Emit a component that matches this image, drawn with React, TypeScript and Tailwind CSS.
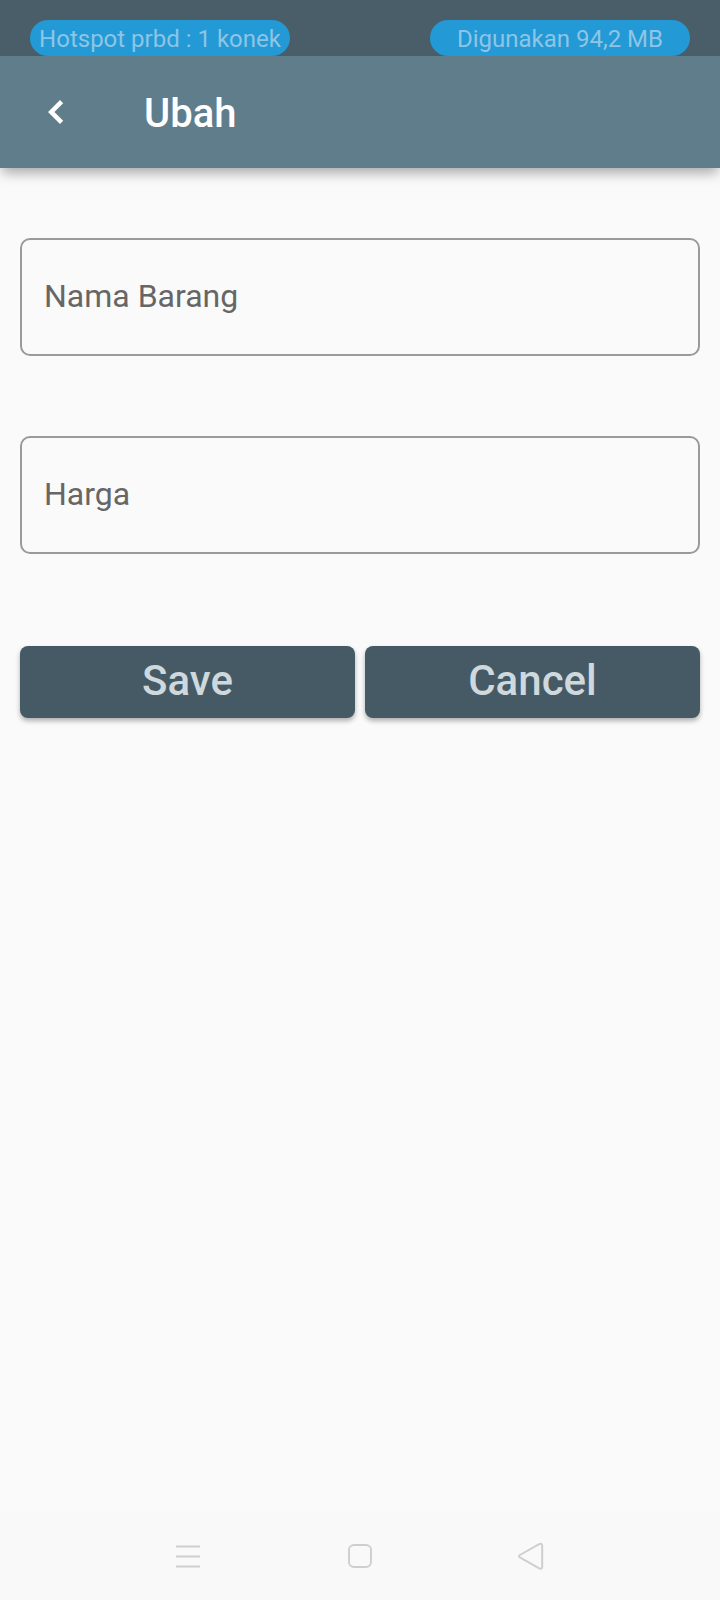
import { useState } from "react";

type FieldProps = { id: string; label: string; inputMode?: "text" | "numeric" };

function StatusPill({ text }: { text: string }) {
  return (
    <span className="flex h-9 w-[260px] items-center justify-center whitespace-nowrap rounded-full bg-[#2399d5] pt-0.5 text-[24px] leading-none text-[#8ec5e5]">
      {text}
    </span>
  );
}

function Field({ id, label, inputMode = "text" }: FieldProps) {
  const [value, setValue] = useState("");
  return (
    <div className="grid h-[118px] items-center rounded-[10px] border-2 border-[#9a9a9a] focus-within:border-[#607d8b]">
      <input
        id={id}
        inputMode={inputMode}
        value={value}
        onChange={(event) => setValue(event.target.value)}
        className="peer col-start-1 row-start-1 h-full w-full min-w-0 bg-transparent px-[22px] text-[32px] text-[#212121] outline-none"
      />
      <label
        htmlFor={id}
        className={
          value
            ? "sr-only"
            : "pointer-events-none col-start-1 row-start-1 px-[22px] pb-0.5 text-[32px] leading-10 text-[#666666] peer-focus:opacity-50"
        }
      >
        {label}
      </label>
    </div>
  );
}

function ActionButton({ text }: { text: string }) {
  return (
    <button
      type="button"
      className="flex h-[72px] flex-1 items-center justify-center rounded-lg bg-[#455a64] pb-0.5 text-[42px] font-medium leading-none text-[#cfd8dc] shadow-[0_3px_5px_rgba(0,0,0,0.3)]"
    >
      {text}
    </button>
  );
}

export default function App() {
  return (
    <div className="flex min-h-screen flex-col bg-[#fafafa] font-[Roboto,sans-serif]">
      <div className="relative z-10 flex h-14 items-end justify-between bg-[#495e68] px-[30px]">
        <StatusPill text="Hotspot prbd : 1 konek" />
        <StatusPill text="Digunakan 94,2 MB" />
      </div>

      <header className="flex h-28 items-center bg-[#607d8b] text-white shadow-[0_7px_12px_-2px_rgba(0,0,0,0.33)]">
        <button type="button" aria-label="Kembali" className="flex h-28 w-28 items-center justify-center">
          <svg width="48" height="48" viewBox="0 0 24 24" fill="currentColor" aria-hidden="true">
            <path d="M15.6 7.6L14 6L8 12L14 18L15.6 16.4L11.2 12Z" />
          </svg>
        </button>
        <h1 className="ml-8 pt-1 text-[40px] font-medium leading-none">Ubah</h1>
      </header>

      <main className="flex-1 px-5 pt-[70px]">
        <form onSubmit={(event) => event.preventDefault()}>
          <div className="flex flex-col gap-20">
            <Field id="nama-barang" label="Nama Barang" />
            <Field id="harga" label="Harga" inputMode="numeric" />
          </div>
          <div className="mt-[92px] flex gap-[10px]">
            <ActionButton text="Save" />
            <ActionButton text="Cancel" />
          </div>
        </form>
      </main>

      <nav className="flex h-[88px] items-center justify-center gap-[132px] bg-[#f9f9f9] text-[#cfcfcf]">
        <button type="button" aria-label="Aplikasi terbaru">
          <svg width="40" height="40" viewBox="0 0 40 40" fill="none" stroke="currentColor" strokeWidth="2" aria-hidden="true">
            <path d="M8 10.5h24M8 20.5h24M8 30.5h24" />
          </svg>
        </button>
        <button type="button" aria-label="Beranda">
          <svg width="40" height="40" viewBox="0 0 40 40" fill="none" stroke="currentColor" strokeWidth="2" aria-hidden="true">
            <rect x="9" y="9" width="22" height="22" rx="5" />
          </svg>
        </button>
        <button type="button" aria-label="Kembali ke layar sebelumnya">
          <svg width="40" height="40" viewBox="0 0 40 40" fill="none" stroke="currentColor" strokeWidth="2" strokeLinejoin="round" aria-hidden="true">
            <path d="M7.9 19L27.2 8.1Q29.9 6.9 30.2 9.6V30.8Q29.9 33.6 27.2 32.4L7.9 21.4Q6 20.2 7.9 19Z" />
          </svg>
        </button>
      </nav>
    </div>
  );
}
